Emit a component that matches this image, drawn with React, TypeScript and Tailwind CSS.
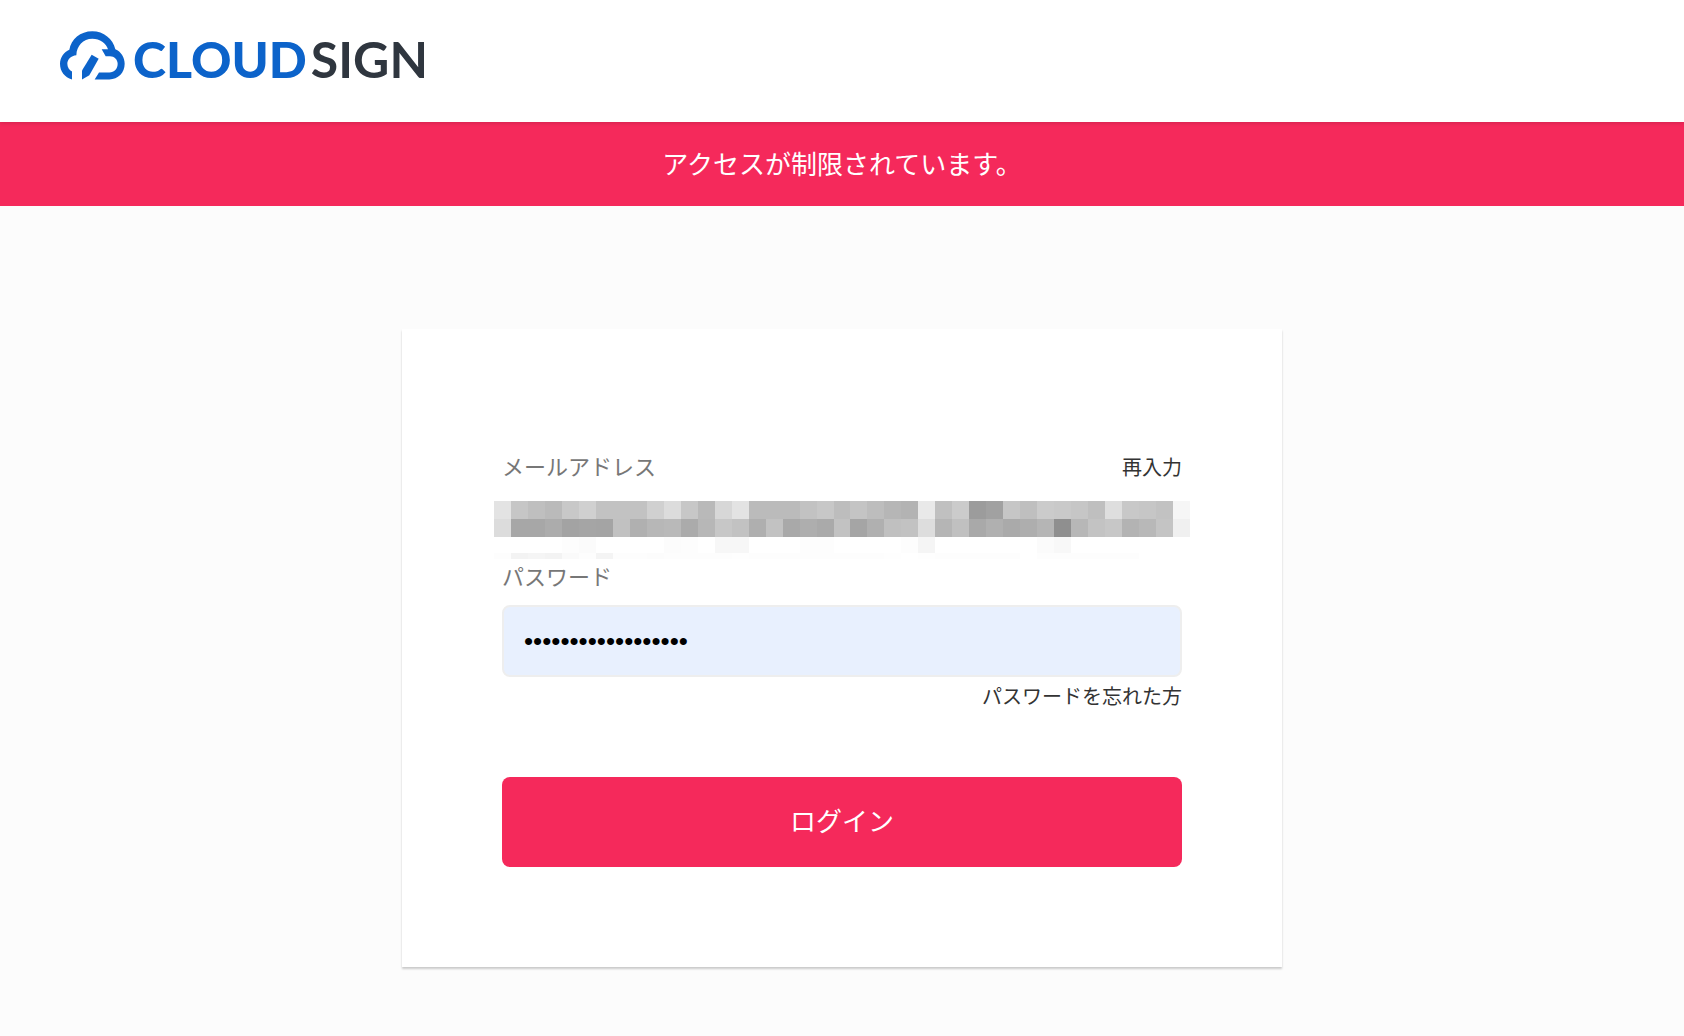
import { useState } from "react";
import type { FormEvent } from "react";

// Grey level of every tile in the masked address, row by row.
const MASK_ROWS = [
  {
    y: 0,
    height: 18,
    tiles:
      "e3c6bfbac8d0c2c2c2d0dcc7b9d7e3bbbbbbc2c7bdc4bdb6b3e9c0cb9ca1c6bfcbc9c6bfdec8c6c2f6",
  },
  {
    y: 18,
    height: 18,
    tiles:
      "dca7a7aca3a5a4c1b0b7b9abb7c7c2afc2a9aeaac2a5b0c0c2ddb5c0a9b0aaaeb58fb7c3c7b3b8c4f0",
  },
  {
    y: 36,
    height: 16,
    tiles:
      "fffffffffdfbfffffffffcfdfff7f7fffffffdfdfffffffffdf5fffffffffffffbf8ffffffffffffff",
  },
  {
    y: 52,
    height: 6,
    tiles:
      "fdf3f5f3fafdf4fdfdfcfdfdfdfdfefdfdfdfdfdfdfdfdfefffefdfdfdfdfdfffdfdfdfdfdfdffffff",
  },
];

const TILE_WIDTH = 17;

function MaskedAddress() {
  return (
    <svg
      viewBox="0 0 697 58"
      preserveAspectRatio="none"
      shapeRendering="crispEdges"
      className="block h-[58px] w-full"
      aria-hidden="true"
    >
      {MASK_ROWS.map((row) =>
        (row.tiles.match(/../g) ?? []).map((level, i) => (
          <rect
            key={`${row.y}-${i}`}
            x={i * TILE_WIDTH}
            y={row.y}
            width={TILE_WIDTH}
            height={row.height}
            fill={`#${level}${level}${level}`}
          />
        ))
      )}
    </svg>
  );
}

function Logo() {
  return (
    <a
      href="#"
      aria-label="CLOUDSIGN"
      className="flex items-center gap-2 font-['Lato',sans-serif] text-[50px] leading-[50px]"
    >
      <svg viewBox="30 33 195 146" className="h-[49px] w-[65px]" fill="#0c63ca">
        <path d="M66 178C44 172 30 154 30 131C30 112 42 96 58 89C63 57 91 33 127 33C161 33 189 56 196 87C213 94 224 111 224 131C224 158 204 178 178 178H134L147 157H178C193 157 203 146 203 131C203 118 193 108 180 108H167L155 87H174C168 69 150 56 127 56C99 56 80 78 79 105C63 107 52 117 52 131C52 142 58 150 66 154Z" />
        <path d="M125 104L146 116L118 165L96 178V151Z" />
      </svg>
      <span className="flex gap-1 pt-2">
        <span className="font-black text-[#0c63ca]">CLOUD</span>
        <span className="font-bold text-[#2f363f]">SIGN</span>
      </span>
    </a>
  );
}

export default function App() {
  const [password, setPassword] = useState("cloudsign-password");

  function handleSubmit(e: FormEvent) {
    e.preventDefault();
  }

  return (
    <div className="min-h-screen bg-[#fcfcfc] font-['Liberation_Sans','Noto_Sans_CJK_JP',sans-serif] text-[#333]">
      <header className="relative flex h-[122px] items-center bg-white px-[60px] pb-3 shadow-[0_1px_4px_rgba(0,0,0,0.15)]">
        <Logo />
      </header>

      <p
        role="alert"
        className="bg-[#f5295b] pt-[23px] pb-[21px] text-center text-[26px] leading-[40px] text-white"
      >
        アクセスが制限されています。
      </p>

      <main className="px-6 pt-[123px] pb-[68px]">
        <form
          onSubmit={handleSubmit}
          className="mx-auto max-w-[880px] bg-white px-[100px] pt-[123px] pb-[100px] shadow-[0_2px_2px_rgba(0,0,0,0.2)]"
        >
          <div className="flex items-center justify-between leading-[32px]">
            <span className="text-[22px] text-[#777]">メールアドレス</span>
            <a href="#" className="text-[20px]">
              再入力
            </a>
          </div>

          <div className="-mx-2 mt-[17px]">
            <MaskedAddress />
          </div>

          <label
            htmlFor="password"
            className="mt-[3px] block text-[22px] leading-[32px] text-[#777]"
          >
            パスワード
          </label>
          <input
            id="password"
            type="password"
            value={password}
            onChange={(e) => setPassword(e.target.value)}
            className="mt-[11px] block h-[72px] w-full rounded-lg border-2 border-[#eee] bg-[#e8f0fe] px-5 text-[26px] text-black outline-none"
          />

          <div className="mt-1 text-right text-[20px] leading-[32px]">
            <a href="#">パスワードを忘れた方</a>
          </div>

          <button
            type="submit"
            className="mt-16 block h-[90px] w-full rounded-lg bg-[#f5295b] text-[26px] text-white"
          >
            ログイン
          </button>
        </form>
      </main>
    </div>
  );
}
